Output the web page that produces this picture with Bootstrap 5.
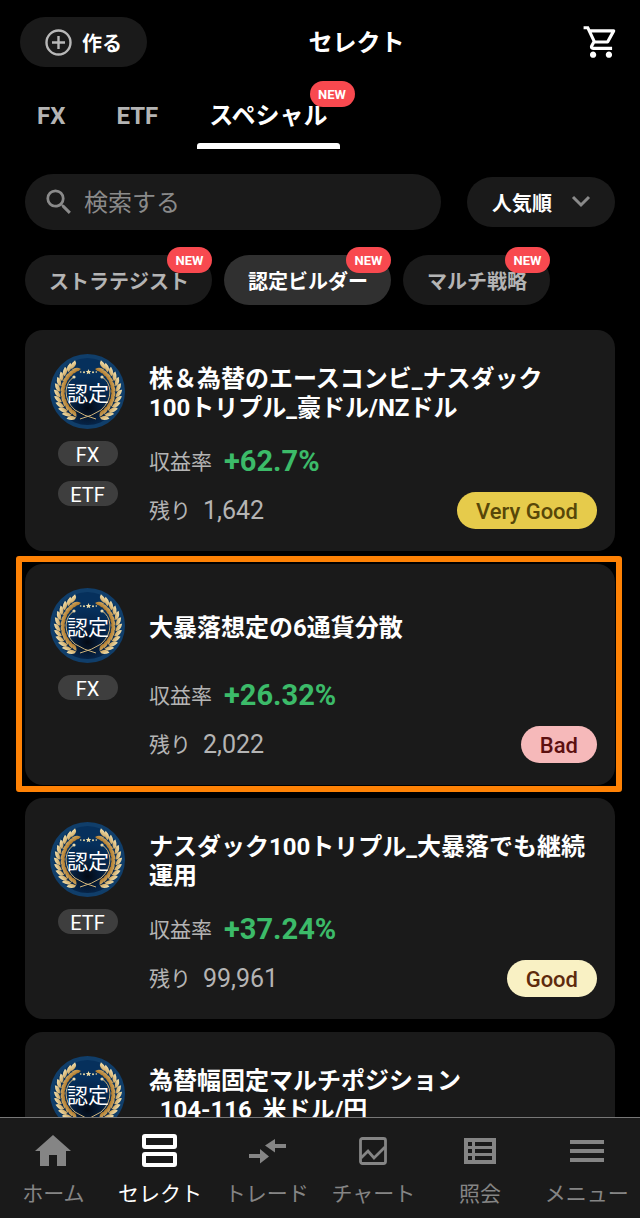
<!DOCTYPE html>
<html lang="ja" data-bs-theme="dark">
<head>
<meta charset="utf-8">
<meta name="viewport" content="width=device-width, initial-scale=1">
<title>セレクト</title>
<link href="https://cdn.jsdelivr.net/npm/bootstrap@5.3.0/dist/css/bootstrap.min.css" rel="stylesheet">
<style>
  body { background: #000; color: #fff; font-family: Roboto, "Noto Sans CJK JP", sans-serif; line-height: 1.2; }
  svg { display: block; }
  .panel { background: #1a1a1a; }
  .top-row { display: grid; grid-template-columns: auto 1fr auto; padding: 17px 20px 0; }
  .top-title { padding-top: 3px; font-size: 24px; font-weight: 700; text-align: center; }
  .make-btn { height: 50px; padding: 0 25px; gap: 10px; font-size: 20px; font-weight: 700; }
  .make-btn span { padding-top: 3px; }
  .top-tabs { gap: 27px; padding: 14px 25px 0; }
  .top-tabs .nav-link { height: 68px; padding: 0 12px; font-size: 24px; font-weight: 700; line-height: 70px; color: #b4b4b4; }
  .top-tabs .nav-link.active { color: #fff; }
  .top-tabs .nav-link.active::after { content: ""; position: absolute; left: 0; right: 0; bottom: 0; height: 6px; border-radius: 3px 3px 0 0; background: #fff; }
  .new-badge { position: absolute; width: 45px; height: 26px; border-radius: 13px; background: #f8494f; color: #fff; font-size: 13px; font-weight: 700; line-height: 28px; text-align: center; }
  .tab-badge { top: 0; right: -15px; }
  .chip-badge { top: -8px; right: 0; }
  .find-row { gap: 26px; padding: 25px 25px 0; }
  .find-box { height: 56px; padding: 0 20px; gap: 11px; }
  .find-box input { min-width: 0; background: transparent; border: 0; outline: 0; padding: 3px 0 0; color: #fff; font-size: 24px; }
  .find-box input::placeholder { color: #8a8a8a; opacity: 1; }
  .sort-box select { width: 148px; height: 50px; padding: 3px 50px 0 25px; border: 0; appearance: none; color: #fff; font-size: 20px; font-weight: 700; }
  .sort-box svg { position: absolute; right: 24px; top: 18px; pointer-events: none; }
  .chips { gap: 12px; padding: 25px 25px 0; }
  .chip { position: relative; height: 50px; padding: 3px 23px 0 24px; border: 0; border-radius: 25px; font-size: 20px; font-weight: 700; color: #b4b4b4; background: #1a1a1a; white-space: nowrap; }
  .chip.active { background: #303030; color: #fff; }
  .feed { min-height: 0; padding: 25px 25px 0; gap: 13px; overflow-y: auto; scrollbar-width: none; }
  .feed::-webkit-scrollbar { display: none; }
  .item { flex: none; flex-direction: row; gap: 24px; min-height: 221px; padding: 24px 18px 16px 25px; border: 0; border-radius: 18px; background: #1a1a1a; color: #fff; }
  .item.picked::after { content: ""; position: absolute; inset: -8px -7px -7px -9px; border: 6px solid #ff8205; border-radius: 3px; pointer-events: none; }
  .tags { gap: 16px; padding-top: 12px; }
  .tag { width: 60px; height: 25px; border-radius: 13px; background: #3e3e3e; font-size: 20px; line-height: 28px; text-align: center; }
  .tags { gap: 15px; }
  .item h2 { height: 78px; margin: 0 0 5px; padding-top: 2px; font-size: 24px; font-weight: 700; line-height: 29px; }
  .figures { height: 49px; gap: 12px; font-size: 21px; color: #b4b4b4; }
  .figures span:first-child { padding-top: 2px; }
  .rate { font-size: 29px; font-weight: 700; color: #3cbb69; }
  .remain { font-size: 25px; }
  .grade { height: 37px; padding: 0 19px; border-radius: 19px; font-size: 22px; font-weight: 500; line-height: 39px; }
  .grade-best { background: #e6cb4b; color: #574708; }
  .grade-good { background: #f9f1c4; color: #5e2a0c; }
  .grade-bad { background: #f6b9ba; color: #5c1010; }
  .dock { flex: none; height: 101px; border-top: 1px solid #777; }
  .dock a { flex: 1 1 0; padding-top: 13px; gap: 8px; font-size: 21px; line-height: 30px; color: #858585; text-decoration: none; white-space: nowrap; }
  .dock a.active { color: #fff; }
</style>
</head>
<body>
<svg width="0" height="0" class="position-absolute" aria-hidden="true">
  <defs>
    <linearGradient id="gold" x1="0" y1="0" x2="0" y2="1"><stop offset="0" stop-color="#f1dfac"/><stop offset=".5" stop-color="#d0aa66"/><stop offset="1" stop-color="#b0792a"/></linearGradient>
    <radialGradient id="glow" cx=".5" cy=".75" r=".5"><stop offset="0" stop-color="#040a14"/><stop offset=".5" stop-color="#062346"/><stop offset="1" stop-color="#06305c"/></radialGradient>
    <g id="leaf"><path d="M37 10q0-5 8-5.500q0 5.500-8 5.500zM37 10.500q2 6 8 4.500q-2-5-8-4.500z" fill="url(#gold)"/></g>
    <g id="branch">
      <path d="M46 65Q34 62 25 56Q16 48 16 37Q17 27 24 23" fill="none" stroke="#cdb27a" stroke-width="1"/>
      <circle cx="24" cy="23" r="1.600" fill="#ead9ac"/>
      <use href="#leaf" transform="rotate(207 38 38)"/><use href="#leaf" transform="rotate(218 38 38)"/>
      <use href="#leaf" transform="rotate(229 38 38)"/><use href="#leaf" transform="rotate(240 38 38)"/>
      <use href="#leaf" transform="rotate(251 38 38)"/><use href="#leaf" transform="rotate(262 38 38)"/>
      <use href="#leaf" transform="rotate(273 38 38)"/><use href="#leaf" transform="rotate(284 38 38)"/>
      <use href="#leaf" transform="rotate(295 38 38)"/><use href="#leaf" transform="rotate(306 38 38)"/>
      <use href="#leaf" transform="rotate(317 38 38)"/><use href="#leaf" transform="rotate(326 38 38)"/>
    </g>
    <symbol id="medal" viewBox="0 0 75 75">
      <circle cx="37.500" cy="37.500" r="37.500" fill="#103e6a"/>
      <circle cx="37.500" cy="37.500" r="33.500" fill="url(#glow)"/>
      <use href="#branch"/><use href="#branch" transform="translate(76 0) scale(-1 1)"/>
      <g fill="#efdfa9"><path d="M38.500 15l.8 1.900 2 .1-1.500 1.300.5 2-1.800-1.100-1.800 1.100.5-2-1.500-1.300 2-.1z"/><circle cx="34" cy="18.300" r="1"/><circle cx="43" cy="18.300" r="1"/><circle cx="30.700" cy="18" r=".8"/><circle cx="46.300" cy="18" r=".8"/></g>
      <text x="38" y="47" text-anchor="middle" font-size="21" fill="#fff" font-family="Noto Sans CJK JP, sans-serif">認定</text>
    </symbol>
  </defs>
</svg>

<div class="d-flex flex-column vh-100">
  <header>
    <div class="top-row align-items-center">
      <button type="button" class="make-btn panel border-0 rounded-pill text-white d-flex align-items-center">
        <svg width="27" height="27" viewBox="0 0 27 27" fill="none" stroke="#b8b8b8" stroke-width="2.400"><circle cx="13.500" cy="13.500" r="12"/><path d="M13.500 7v13M7 13.500h13"/></svg>
        <span>作る</span>
      </button>
      <h1 class="top-title m-0">セレクト</h1>
      <a href="#cart" class="ps-3" aria-label="カート">
        <svg width="38" height="38" viewBox="0 0 24 24" fill="#fff"><path d="M15.550 13c.750 0 1.410-.410 1.750-1.030l3.580-6.490A.996.996 0 0 0 20.010 4H5.210l-.940-2H1v2h2l3.600 7.590-1.350 2.440C4.520 15.370 5.480 17 7 17h12v-2H7l1.100-2h7.450zM6.160 6h12.150l-2.760 5H8.530L6.160 6zM7 18c-1.100 0-1.990.900-1.990 2S5.900 22 7 22s2-.900 2-2-.900-2-2-2zm10 0c-1.100 0-1.990.900-1.990 2s.890 2 1.990 2 2-.900 2-2-.900-2-2-2z"/></svg>
      </a>
    </div>
    <nav class="nav top-tabs">
      <a class="nav-link" href="#fx">FX</a>
      <a class="nav-link" href="#etf">ETF</a>
      <a class="nav-link active position-relative" href="#special" aria-current="page">スペシャル<span class="new-badge tab-badge">NEW</span></a>
    </nav>
  </header>

  <div class="find-row d-flex align-items-center">
    <div class="find-box panel rounded-pill d-flex align-items-center flex-grow-1">
      <svg width="28" height="28" viewBox="2 2 20 20" fill="#8a8a8a" aria-hidden="true"><path d="M15.500 14h-.790l-.280-.270A6.471 6.471 0 0 0 16 9.500 6.500 6.500 0 1 0 9.500 16c1.610 0 3.090-.590 4.230-1.570l.270.280v.790l5 4.990L20.490 19l-4.990-5zm-6 0C7.010 14 5 11.990 5 9.500S7.010 5 9.500 5 14 7.010 14 9.500 11.990 14 9.500 14z"/></svg>
      <input type="search" class="flex-grow-1" placeholder="検索する" aria-label="検索する">
    </div>
    <div class="sort-box position-relative">
      <select class="panel rounded-pill" aria-label="並び順"><option>人気順</option></select>
      <svg width="20" height="14" viewBox="0 0 20 14" fill="none" stroke="#8a8a8a" stroke-width="3"><path d="M2 2l8 8 8-8"/></svg>
    </div>
  </div>

  <div class="chips d-flex">
    <button type="button" class="chip">ストラテジスト<span class="new-badge chip-badge">NEW</span></button>
    <button type="button" class="chip active" aria-pressed="true">認定ビルダー<span class="new-badge chip-badge">NEW</span></button>
    <button type="button" class="chip">マルチ戦略<span class="new-badge chip-badge">NEW</span></button>
  </div>

  <main class="feed d-flex flex-column flex-grow-1">
    <article class="card item">
      <div class="d-flex flex-column align-items-center">
        <svg width="75" height="75"><use href="#medal"/></svg>
        <div class="tags d-flex flex-column"><span class="tag">FX</span><span class="tag">ETF</span></div>
      </div>
      <div class="flex-grow-1">
        <h2 class="d-flex align-items-center"><span>株＆為替のエースコンビ_ナスダック<br>100トリプル_豪ドル/NZドル</span></h2>
        <div class="figures d-flex align-items-center"><span>収益率</span><span class="rate">+62.7%</span></div>
        <div class="figures d-flex align-items-center"><span>残り</span><span class="remain">1,642</span><span class="grade grade-best ms-auto">Very Good</span></div>
      </div>
    </article>

    <article class="card item picked">
      <div class="d-flex flex-column align-items-center">
        <svg width="75" height="75"><use href="#medal"/></svg>
        <div class="tags d-flex flex-column"><span class="tag">FX</span></div>
      </div>
      <div class="flex-grow-1">
        <h2 class="d-flex align-items-center">大暴落想定の6通貨分散</h2>
        <div class="figures d-flex align-items-center"><span>収益率</span><span class="rate">+26.32%</span></div>
        <div class="figures d-flex align-items-center"><span>残り</span><span class="remain">2,022</span><span class="grade grade-bad ms-auto">Bad</span></div>
      </div>
    </article>

    <article class="card item">
      <div class="d-flex flex-column align-items-center">
        <svg width="75" height="75"><use href="#medal"/></svg>
        <div class="tags d-flex flex-column"><span class="tag">ETF</span></div>
      </div>
      <div class="flex-grow-1">
        <h2 class="d-flex align-items-center"><span>ナスダック100トリプル_大暴落でも継続<br>運用</span></h2>
        <div class="figures d-flex align-items-center"><span>収益率</span><span class="rate">+37.24%</span></div>
        <div class="figures d-flex align-items-center"><span>残り</span><span class="remain">99,961</span><span class="grade grade-good ms-auto">Good</span></div>
      </div>
    </article>

    <article class="card item">
      <div class="d-flex flex-column align-items-center">
        <svg width="75" height="75"><use href="#medal"/></svg>
      </div>
      <div class="flex-grow-1">
        <h2 class="d-flex align-items-center"><span>為替幅固定マルチポジション<br>_104-116_米ドル/円</span></h2>
      </div>
    </article>
  </main>

  <nav class="dock panel d-flex">
    <a href="#home" class="d-flex flex-column align-items-center">
      <svg width="40" height="40" viewBox="0 0 40 40" fill="currentColor"><path d="M20 4L2 20h5v15h9V24h8v11h9V20h5z"/></svg>ホーム</a>
    <a href="#select" class="active d-flex flex-column align-items-center" aria-current="page">
      <svg width="40" height="40" viewBox="0 0 40 40" fill="none" stroke="currentColor" stroke-width="4"><rect x="4" y="5" width="31" height="11" rx="1"/><rect x="4" y="23" width="31" height="11" rx="1"/></svg>セレクト</a>
    <a href="#trade" class="d-flex flex-column align-items-center">
      <svg width="40" height="40" viewBox="0 0 40 40" fill="currentColor"><path d="M18 14.500L28 8v5h11v4H28v4.500zM2 23h11v-5l9 7.500-9 7V27H2z"/></svg>トレード</a>
    <a href="#chart" class="d-flex flex-column align-items-center">
      <svg width="40" height="40" viewBox="0 0 40 40" fill="none" stroke="currentColor" stroke-width="2.800"><rect x="7.500" y="7.500" width="25" height="25" rx="2"/><path d="M8 27l7-7 6 7 11-11"/></svg>チャート</a>
    <a href="#inquiry" class="d-flex flex-column align-items-center">
      <svg width="40" height="40" viewBox="0 0 40 40" fill="currentColor" fill-rule="evenodd"><path d="M4 7h32v26H4zM8 11v4h4v-4zM15 11v4h17v-4zM8 18v4h4v-4zM15 18v4h17v-4zM8 25v4h4v-4zM15 25v4h17v-4z"/></svg>照会</a>
    <a href="#menu" class="d-flex flex-column align-items-center">
      <svg width="40" height="40" viewBox="0 0 40 40" fill="currentColor"><path d="M3 9h34v4H3zM3 18h34v4H3zM3 27h34v4H3z"/></svg>メニュー</a>
  </nav>
</div>
<script src="https://cdn.jsdelivr.net/npm/bootstrap@5.3.0/dist/js/bootstrap.bundle.min.js"></script>
</body>
</html>
